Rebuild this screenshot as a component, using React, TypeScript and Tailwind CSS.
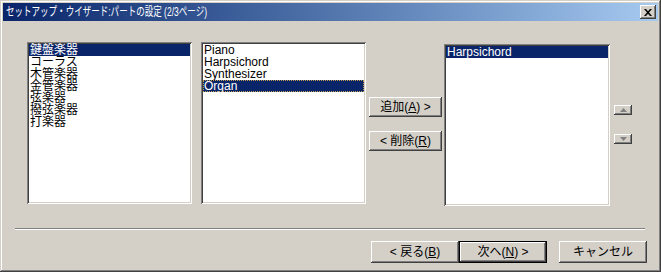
const raised =
  "bg-[#d4d0c8] shadow-[inset_-1px_-1px_0_#404040,inset_1px_1px_0_#ffffff,inset_-2px_-2px_0_#808080]";
const sunken =
  "bg-white shadow-[inset_1px_1px_0_#808080,inset_-1px_-1px_0_#ffffff,inset_2px_2px_0_#404040,inset_-2px_-2px_0_#d4d0c8]";

const ListBox = ({
  items,
  selected,
  focus,
  className,
}: {
  items: string[];
  selected: number;
  focus?: boolean;
  className?: string;
}) => (
  <div className={`${sunken} p-[2px] ${className ?? ""}`}>
    {items.map((it, i) => (
      <div
        key={it}
        className={`h-[12px] leading-[12px] pl-[1px] whitespace-nowrap ${
          i === selected ? "bg-[#0a246a] text-white" : "text-black"
        } ${i === selected && focus ? "outline outline-1 outline-dotted outline-[#c0a050] -outline-offset-1" : ""}`}
      >
        {it}
      </div>
    ))}
  </div>
);

const Btn = ({
  children,
  className,
  isDefault,
}: {
  children: React.ReactNode;
  className?: string;
  isDefault?: boolean;
}) =>
  isDefault ? (
    <div className={`border border-black ${className ?? ""}`}>
      <div className={`${raised} w-full h-full flex items-center justify-center`}>{children}</div>
    </div>
  ) : (
    <div className={`${raised} flex items-center justify-center ${className ?? ""}`}>{children}</div>
  );

const Arrow = ({ up }: { up?: boolean }) => (
  <div className={`${raised} w-[18px] h-[10px] flex items-center justify-center`}>
    <svg width="7" height="4" viewBox="0 0 7 4">
      {up ? <polygon points="3.5,0 7,4 0,4" fill="#808080" /> : <polygon points="0,0 7,0 3.5,4" fill="#808080" />}
    </svg>
  </div>
);

export default function App() {
  return (
    <div className="w-[661px] h-[272px] p-[3px] flex flex-col bg-[#d4d0c8] shadow-[inset_-1px_-1px_0_#404040,inset_1px_1px_0_#d4d0c8,inset_-2px_-2px_0_#808080,inset_2px_2px_0_#ffffff] font-['Liberation_Sans','Noto_Sans_CJK_JP',sans-serif] text-[12px]">
      {/* title bar */}
      <div className="h-[18px] flex items-center justify-between bg-gradient-to-r from-[#0a246a] to-[#a6caf0] pl-[3px] pr-[2px]">
        <span className="text-white leading-[18px] whitespace-nowrap inline-block origin-left scale-x-[0.71]">
          セットアップ・ウイザード:パートの設定 (2/3ページ)
        </span>
        <div className={`${raised} w-[16px] h-[14px] flex items-center justify-center`}>
          <svg width="8" height="7" viewBox="0 0 8 7">
            <path d="M0 0h2l2 2.3L6 0h2L5 3.5 8 7H6L4 4.7 2 7H0l3-3.5z" fill="#000" />
          </svg>
        </div>
      </div>

      {/* content */}
      <div className="flex pt-[21px] pl-[24px] items-start">
        <ListBox
          className="w-[165px] h-[162px]"
          items={["鍵盤楽器", "コーラス", "木管楽器", "金管楽器", "弦楽器", "撥弦楽器", "打楽器"]}
          selected={0}
        />
        <ListBox
          className="w-[165px] h-[162px] ml-[9px]"
          items={["Piano", "Harpsichord", "Synthesizer", "Organ"]}
          selected={3}
          focus
        />
        <div className="flex flex-col ml-[3px] pt-[55px] gap-[14px]">
          <Btn className="w-[73px] h-[20px]">
            <span>
              追加(<u>A</u>) &gt;
            </span>
          </Btn>
          <Btn className="w-[73px] h-[20px]">
            <span>
              &lt; 削除(<u>R</u>)
            </span>
          </Btn>
        </div>
        <ListBox className="w-[166px] h-[162px] ml-[2px] mt-[2px]" items={["Harpsichord"]} selected={0} />
        <div className="flex flex-col ml-[4px] pt-[63px] gap-[19px]">
          <Arrow up />
          <Arrow />
        </div>
      </div>

      {/* separator */}
      <div className="ml-[12px] w-[630px] mt-[22px] border-t border-t-[#808080] border-b border-b-white" />

      {/* bottom buttons */}
      <div className="flex justify-end pr-[11px] mt-[11px]">
        <Btn className="w-[88px] h-[22px]">
          <span>
            &lt; 戻る(<u>B</u>)
          </span>
        </Btn>
        <Btn className="w-[88px] h-[22px]" isDefault>
          <span>
            次へ(<u>N</u>) &gt;
          </span>
        </Btn>
        <Btn className="w-[88px] h-[22px] ml-[12px]">
          <span>キャンセル</span>
        </Btn>
      </div>
    </div>
  );
}
